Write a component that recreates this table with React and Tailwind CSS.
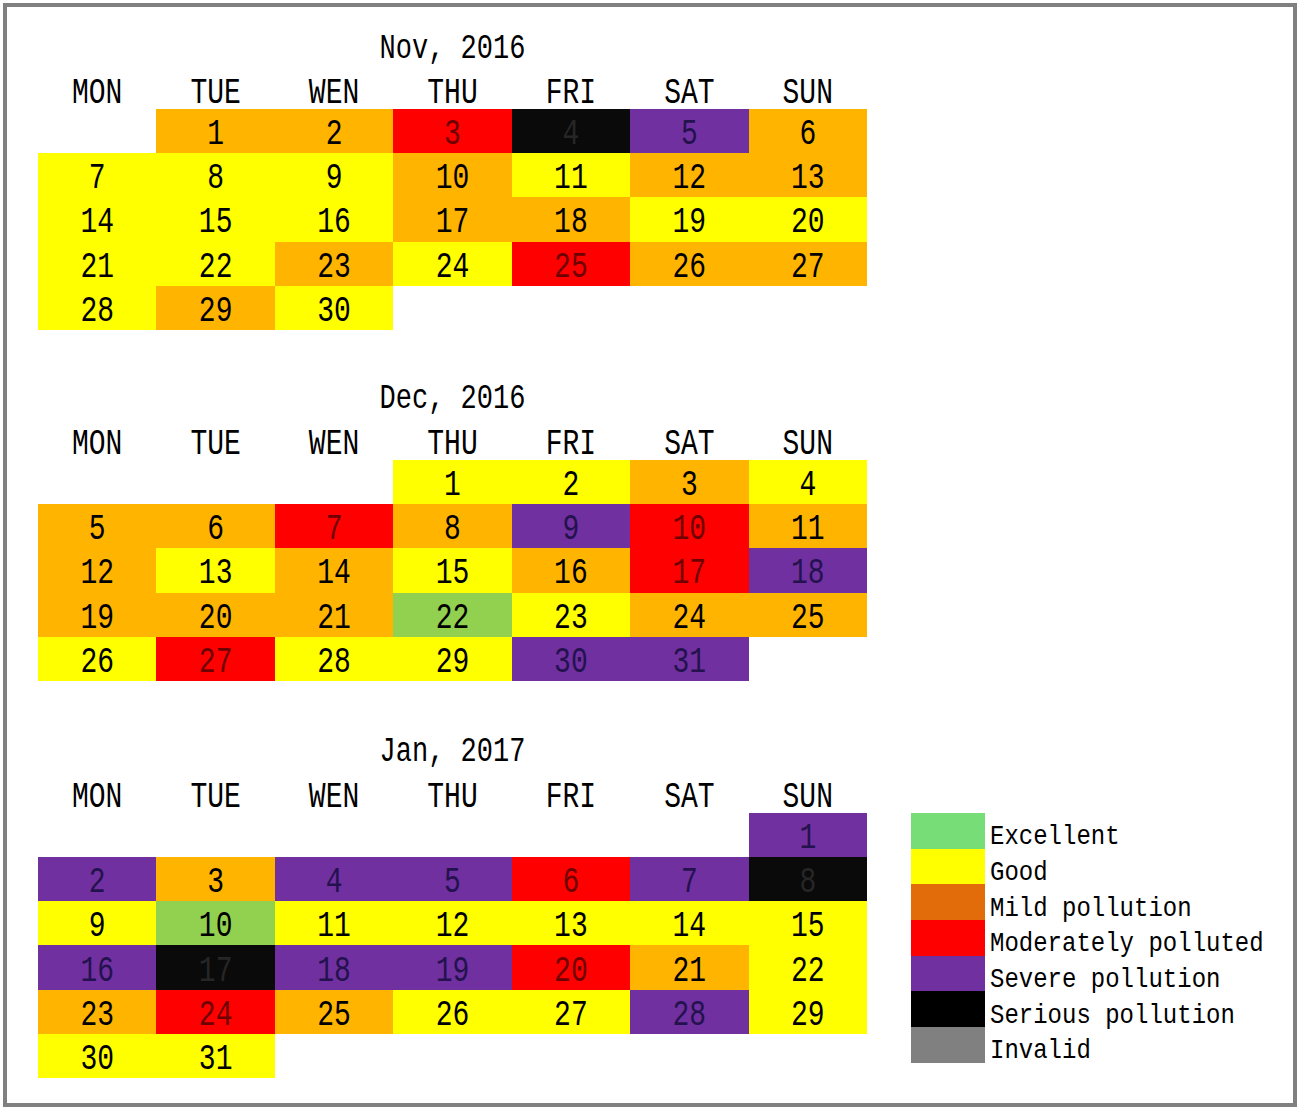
import React from 'react';

// cell colour classes, keyed by level
const LEVELS = {
  G: 'bg-[#92d050] text-black',
  Y: 'bg-[#ffff00] text-black',
  O: 'bg-[#ffb400] text-black',
  R: 'bg-[#ff0000] text-[#6e0000]',
  P: 'bg-[#7030a0] text-[#24124e]',
  K: 'bg-[#0a0a0a] text-[#262626]',
};

const DAYS = ['MON', 'TUE', 'WEN', 'THU', 'FRI', 'SAT', 'SUN'];

const months = [
  {
    title: 'Nov, 2016',
    offset: 1,
    levels: 'OORKPO' + 'YYYOYOO' + 'YYYOOYY' + 'YYOYROO' + 'YOY',
  },
  {
    title: 'Dec, 2016',
    offset: 3,
    levels: 'YYOY' + 'OOROPRO' + 'OYOYORP' + 'OOOGYOO' + 'YRYYPP',
  },
  {
    title: 'Jan, 2017',
    offset: 6,
    levels: 'P' + 'POPPRPK' + 'YGYYYYY' + 'PKPPROY' + 'OROYYPY' + 'YY',
  },
];

const legend = [
  { label: 'Excellent', color: 'bg-[#77dd77]' },
  { label: 'Good', color: 'bg-[#ffff00]' },
  { label: 'Mild pollution', color: 'bg-[#e36c0a]' },
  { label: 'Moderately polluted', color: 'bg-[#ff0000]' },
  { label: 'Severe pollution', color: 'bg-[#7030a0]' },
  { label: 'Serious pollution', color: 'bg-black' },
  { label: 'Invalid', color: 'bg-[#808080]' },
];

const Tall = ({ children, className = '' }) => (
  <span className={`inline-block scale-y-[1.3] ${className}`}>{children}</span>
);

const MonthGrid = ({ month }) => {
  const blanks = Array.from({ length: month.offset });
  return (
    <div className="grid grid-cols-7 w-[829px]">
      {blanks.map((_, i) => (
        <div key={'b' + i} className="h-[44.2px]" />
      ))}
      {month.levels.split('').map((lv, i) => (
        <div
          key={i}
          className={`h-[44.2px] flex items-center justify-center pt-[8px] text-[28px] leading-none ${LEVELS[lv]}`}
        >
          <Tall>{i + 1}</Tall>
        </div>
      ))}
    </div>
  );
};

const Month = ({ month, className = '', children }) => (
  <div className={`flex flex-col ${className}`}>
    <div className="w-[829px] h-[44px] flex items-center justify-center pt-[4px] text-[27px] leading-none text-black">
      <Tall>{month.title}</Tall>
    </div>
    <div className="w-[829px] h-[40px] grid grid-cols-7 pt-[10px]">
      {DAYS.map((d) => (
        <div key={d} className="flex items-center justify-center text-[28px] leading-none text-black">
          <Tall>{d}</Tall>
        </div>
      ))}
    </div>
    <div className="flex items-start gap-[44px]">
      <MonthGrid month={month} />
      {children}
    </div>
  </div>
);

const Legend = () => (
  <div className="flex flex-col">
    {legend.map((item) => (
      <div key={item.label} className="flex items-center h-[35.7px]">
        <div className={`w-[74px] h-full ${item.color}`} />
        <div className="pl-[5px] pt-[13px] text-[24px] leading-none text-black whitespace-nowrap">
          <span className="inline-block scale-y-[1.12]">{item.label}</span>
        </div>
      </div>
    ))}
  </div>
);

export default function App() {
  return (
    <div className="w-[1300px] h-[1110px] bg-white p-[3px] font-['Liberation_Mono',monospace]">
      <div className="h-[1104px] border-4 border-[#808080] pl-[31px] pt-[18px] flex flex-col gap-[46px]">
        <Month month={months[0]} />
        <Month month={months[1]} />
        <Month month={months[2]} className="mt-[2px]">
          <Legend />
        </Month>
      </div>
    </div>
  );
}
